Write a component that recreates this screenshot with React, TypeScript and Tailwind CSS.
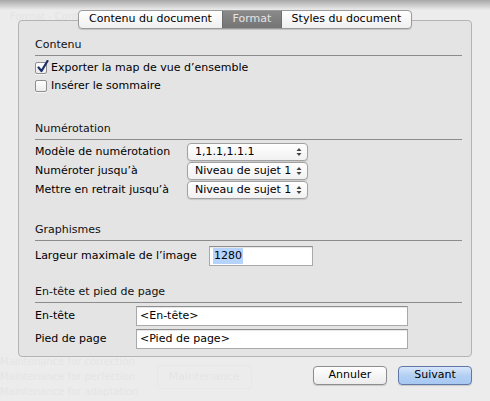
import React from 'react';

const font = { fontFamily: '"DejaVu Sans", Verdana, sans-serif' };

function Checkbox({ checked }: { checked?: boolean }) {
  return (
    <div className="relative w-[12px] h-[12px] rounded-[2px] border border-[#8f8f8f] bg-gradient-to-b from-white to-[#ececec] shadow-[0_1px_0_rgba(255,255,255,0.6)]">
      {checked && (
        <svg className="absolute -top-[3px] left-[1px]" width="12" height="13" viewBox="0 0 12 13">
          <path d="M1.5 7.5 L4.5 11 L10.5 1" fill="none" stroke="#1d2f6b" strokeWidth="2.2" strokeLinecap="round" strokeLinejoin="round" />
        </svg>
      )}
    </div>
  );
}

function Section({ title, children, className = '' }: { title: string; children: React.ReactNode; className?: string }) {
  return (
    <div className={className}>
      <div className="h-[18px] leading-[14px] text-[11px] text-[#111] border-b border-[#8c8c8c]">{title}</div>
      {children}
    </div>
  );
}

function Popup({ value }: { value: string }) {
  return (
    <div className="w-[121px] h-[18px] rounded-[4px] border border-[#a2a2a2] bg-gradient-to-b from-white to-[#f1f1f1] shadow-[0_1px_1px_rgba(0,0,0,0.12)] flex items-center pl-[7px] pr-[5px] text-[11px] text-black">
      <span className="flex-1">{value}</span>
      <svg width="6" height="10" viewBox="0 0 6 10">
        <path d="M0.5 4 L3 1 L5.5 4 Z" fill="#444" />
        <path d="M0.5 6 L3 9 L5.5 6 Z" fill="#444" />
      </svg>
    </div>
  );
}

function Field({ children, className = '' }: { children?: React.ReactNode; className?: string }) {
  return (
    <div className={`h-[20px] bg-white border border-[#a9a9a9] border-t-[#8e8e8e] shadow-[inset_0_1px_1px_rgba(0,0,0,0.1)] flex items-center pl-[3px] text-[11px] text-black ${className}`}>
      {children}
    </div>
  );
}

export default function App() {
  return (
    <div className="relative w-[490px] h-[401px] overflow-hidden bg-[#ececec] flex flex-col" style={font}>
      {/* faded content from the window behind the sheet */}
      <div className="absolute inset-x-0 top-0 h-[10px] bg-gradient-to-b from-[#a8a8a8] to-[#ececec]" />
      <div className="absolute left-[10px] top-[9px] text-[10px] text-[#e4e4e4]">Format · Contenu</div>
      <div className="absolute left-0 top-[354px] flex items-center gap-[18px] text-[10px] text-[#e5e5e5] leading-[15px]">
        <div className="flex flex-col">
          <span>Maintenance for correction</span>
          <span>Maintenance for perfection</span>
          <span>Maintenance for adaptation</span>
        </div>
        <div className="w-[95px] h-[24px] rounded-[4px] border border-[#e8e8e8] flex items-center justify-center text-[11px]">Maintenance</div>
      </div>

      {/* tabs */}
      <div className="relative z-10 mt-[10px] flex justify-center">
        <div className="flex h-[19px] rounded-[4px] border border-[#9a9a9a] bg-gradient-to-b from-white to-[#efefef] shadow-[0_1px_1px_rgba(0,0,0,0.15)] text-[11px] overflow-hidden">
          <div className="w-[143px] flex items-center justify-center text-black">Contenu du document</div>
          <div className="w-[60px] flex items-center justify-center bg-gradient-to-b from-[#8a8a8a] to-[#747474] text-[#e4e4e4] border-x border-[#6d6d6d]">Format</div>
          <div className="w-[129px] flex items-center justify-center text-black">Styles du document</div>
        </div>
      </div>

      {/* group box */}
      <div className="relative -mt-[9px] mx-[18px] h-[337px] rounded-[4px] border border-[#b4b4b4] bg-[#e4e4e4] pl-[16px] pr-[9px] pt-[17px] text-[11px] text-black">
        <Section title="Contenu">
          <div className="mt-[3px] flex flex-col">
            <label className="h-[18px] flex items-center gap-[4px]">
              <Checkbox checked />
              <span>Exporter la map de vue d’ensemble</span>
            </label>
            <label className="h-[18px] flex items-center gap-[4px]">
              <Checkbox />
              <span>Insérer le sommaire</span>
            </label>
          </div>
        </Section>

        <Section title="Numérotation" className="mt-[27px]">
          <div className="mt-[3px] flex flex-col gap-[1px]">
            {[
              ['Modèle de numérotation', '1,1.1,1.1.1'],
              ['Numéroter jusqu’à', 'Niveau de sujet 1'],
              ['Mettre en retrait jusqu’à', 'Niveau de sujet 1'],
            ].map(([label, value]) => (
              <div key={label} className="h-[18px] flex items-center">
                <span className="w-[152px]">{label}</span>
                <Popup value={value} />
              </div>
            ))}
          </div>
        </Section>

        <Section title="Graphismes" className="mt-[24px]">
          <div className="mt-[5px] flex items-center">
            <span className="w-[174px]">Largeur maximale de l’image</span>
            <Field className="w-[104px]">
              <span className="bg-[#b5d3fb] px-[1px]">1280</span>
            </Field>
          </div>
        </Section>

        <Section title="En-tête et pied de page" className="mt-[19px]">
          <div className="mt-[3px] flex flex-col gap-[3px]">
            <div className="flex items-center">
              <span className="w-[101px]">En-tête</span>
              <Field className="w-[272px]">&lt;En-tête&gt;</Field>
            </div>
            <div className="flex items-center">
              <span className="w-[101px]">Pied de page</span>
              <Field className="w-[272px]">&lt;Pied de page&gt;</Field>
            </div>
          </div>
        </Section>
      </div>

      {/* buttons */}
      <div className="relative mt-[9px] mr-[18px] flex justify-end gap-[11px] text-[11px]">
        <button className="w-[74px] h-[19px] rounded-[4px] border border-[#8d8d8d] bg-gradient-to-b from-white to-[#ececec] shadow-[0_1px_1px_rgba(0,0,0,0.15)] text-black">
          Annuler
        </button>
        <button className="w-[74px] h-[19px] rounded-[4px] border border-[#5f78a8] bg-gradient-to-b from-[#d8e7fa] via-[#b3d0f3] to-[#a7c8f2] shadow-[0_1px_1px_rgba(0,0,0,0.15)] text-black">
          Suivant
        </button>
      </div>
    </div>
  );
}
